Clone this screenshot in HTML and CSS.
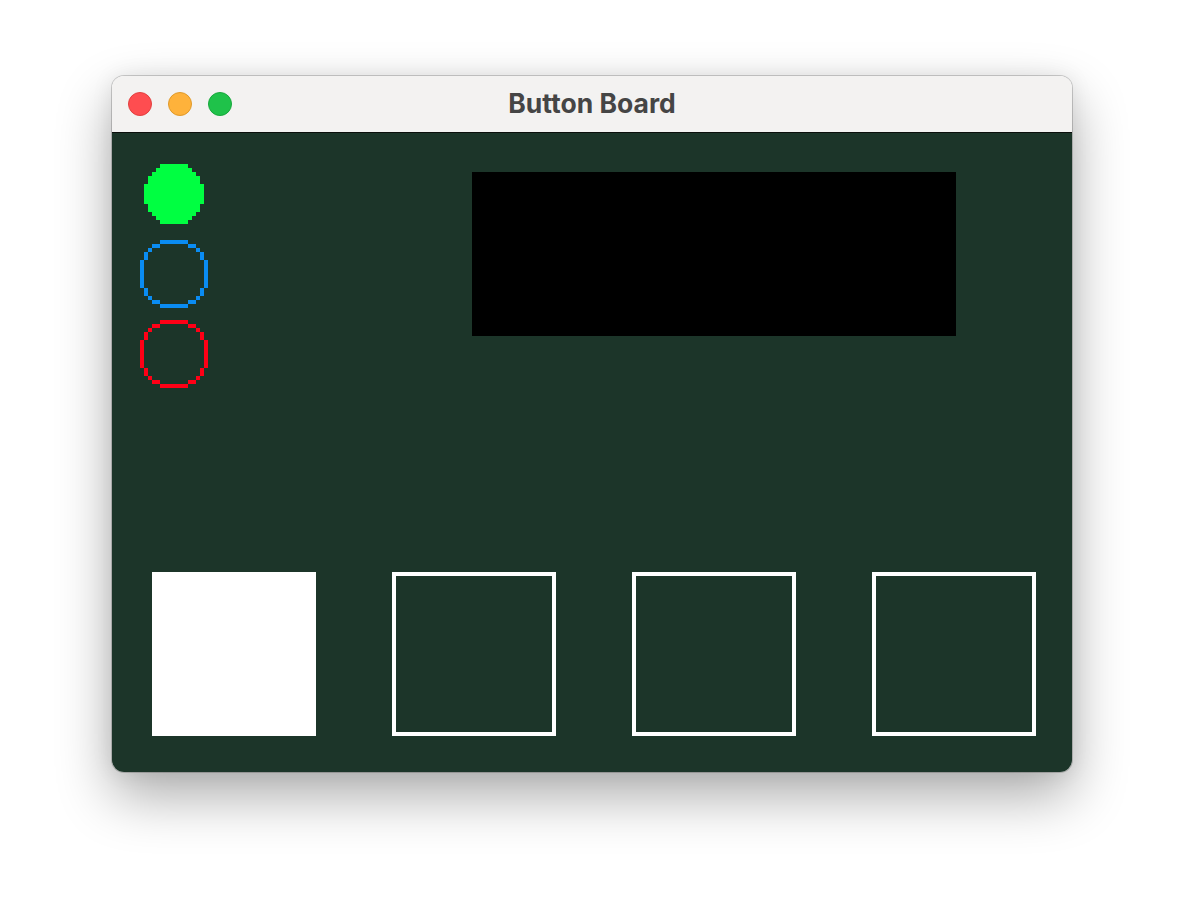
FILE: index.html
```html
<!DOCTYPE html>
<html>
<head>
<meta charset="utf-8">
<title>Button Board</title>
<link rel="stylesheet" href="styles.css">
</head>
<body>
<div class="window">
  <div class="titlebar">
    <div class="lights">
      <span class="light close"></span>
      <span class="light min"></span>
      <span class="light zoom"></span>
    </div>
    <div class="title">Button Board</div>
    <div></div>
  </div>
  <div class="content">
    <div class="top">
      <div class="indicators">
        <div class="ind">
          <svg class="dot" viewBox="0 0 15 15" width="60" height="60" shape-rendering="crispEdges">
            <path fill="#00ff41" d="M4 0H11V1H12V2H13V3H14V5H15V10H14V12H13V13H12V14H11V15H4V14H3V13H2V12H1V10H0V5H1V3H2V2H3V1H4Z"/>
          </svg>
        </div>
        <div class="ind">
          <svg class="ring" viewBox="0 0 17 17" width="68" height="68" shape-rendering="crispEdges">
            <path fill="#0a8cf2" d="M5 0h7v1h-7zM3 1h2v1h-2zM12 1h2v1h-2zM2 2h1v1h-1zM14 2h1v1h-1zM1 3h1v2h-1zM15 3h1v2h-1zM0 5h1v7h-1zM16 5h1v7h-1zM1 12h1v2h-1zM15 12h1v2h-1zM2 14h1v1h-1zM14 14h1v1h-1zM3 15h2v1h-2zM12 15h2v1h-2zM5 16h7v1h-7z"/>
          </svg>
        </div>
        <div class="ind">
          <svg class="ring" viewBox="0 0 17 17" width="68" height="68" shape-rendering="crispEdges">
            <path fill="#ff0016" d="M5 0h7v1h-7zM3 1h2v1h-2zM12 1h2v1h-2zM2 2h1v1h-1zM14 2h1v1h-1zM1 3h1v2h-1zM15 3h1v2h-1zM0 5h1v7h-1zM16 5h1v7h-1zM1 12h1v2h-1zM15 12h1v2h-1zM2 14h1v1h-1zM14 14h1v1h-1zM3 15h2v1h-2zM12 15h2v1h-2zM5 16h7v1h-7z"/>
          </svg>
        </div>
      </div>
      <div class="screen"></div>
    </div>
    <div class="pads">
      <div class="pad on"></div>
      <div class="pad"></div>
      <div class="pad"></div>
      <div class="pad"></div>
    </div>
  </div>
</div>
</body>
</html>
```
FILE: styles.css
```css
html, body {
  margin: 0;
  padding: 0;
  background: #ffffff;
}
body {
  padding-top: 76px;
  min-height: 920px;
  box-sizing: border-box;
  font-family: "Inter", "Liberation Sans", sans-serif;
}
.window {
  width: 960px;
  height: 696px;
  margin: 0 auto;
  border-radius: 12px;
  overflow: hidden;
  box-shadow: 0 0 0 1px rgba(0,0,0,0.18), 0 24px 55px rgba(0,0,0,0.33), 0 0 22px rgba(0,0,0,0.08);
  display: flex;
  flex-direction: column;
}
.titlebar {
  height: 56px;
  flex: none;
  background: #f3f2f1;
  display: grid;
  grid-template-columns: 1fr auto 1fr;
  align-items: center;
}
.lights {
  display: flex;
  gap: 16px;
  padding-left: 16px;
}
.light {
  width: 24px;
  height: 24px;
  border-radius: 50%;
  box-sizing: border-box;
}
.close { background: #fe4d50; border: 1px solid #e2403f; }
.min { background: #feb23b; border: 1px solid #e09a2a; }
.zoom { background: #1fc24a; border: 1px solid #17a83c; }
.title {
  font-size: 26.5px;
  font-weight: 700;
  color: #454545;
  padding-bottom: 3px;
}
.content {
  flex: 1;
  background: #1c3529;
  box-shadow: inset 0 1px 0 #0b0f0c;
  display: flex;
  flex-direction: column;
}
.top {
  display: flex;
  padding: 28px 0 0 28px;
}
.indicators {
  display: flex;
  flex-direction: column;
  gap: 12px;
}
.ind {
  width: 68px;
  height: 68px;
  display: flex;
  align-items: center;
  justify-content: center;
}
.ind svg { display: block; }
.screen {
  width: 484px;
  height: 164px;
  background: #000;
  margin-left: 264px;
  margin-top: 12px;
}
.pads {
  margin-top: auto;
  display: flex;
  gap: 76px;
  padding: 0 0 36px 40px;
}
.pad {
  width: 164px;
  height: 164px;
  box-sizing: border-box;
  border: 4px solid #ffffff;
}
.pad.on {
  background: #ffffff;
}
```
